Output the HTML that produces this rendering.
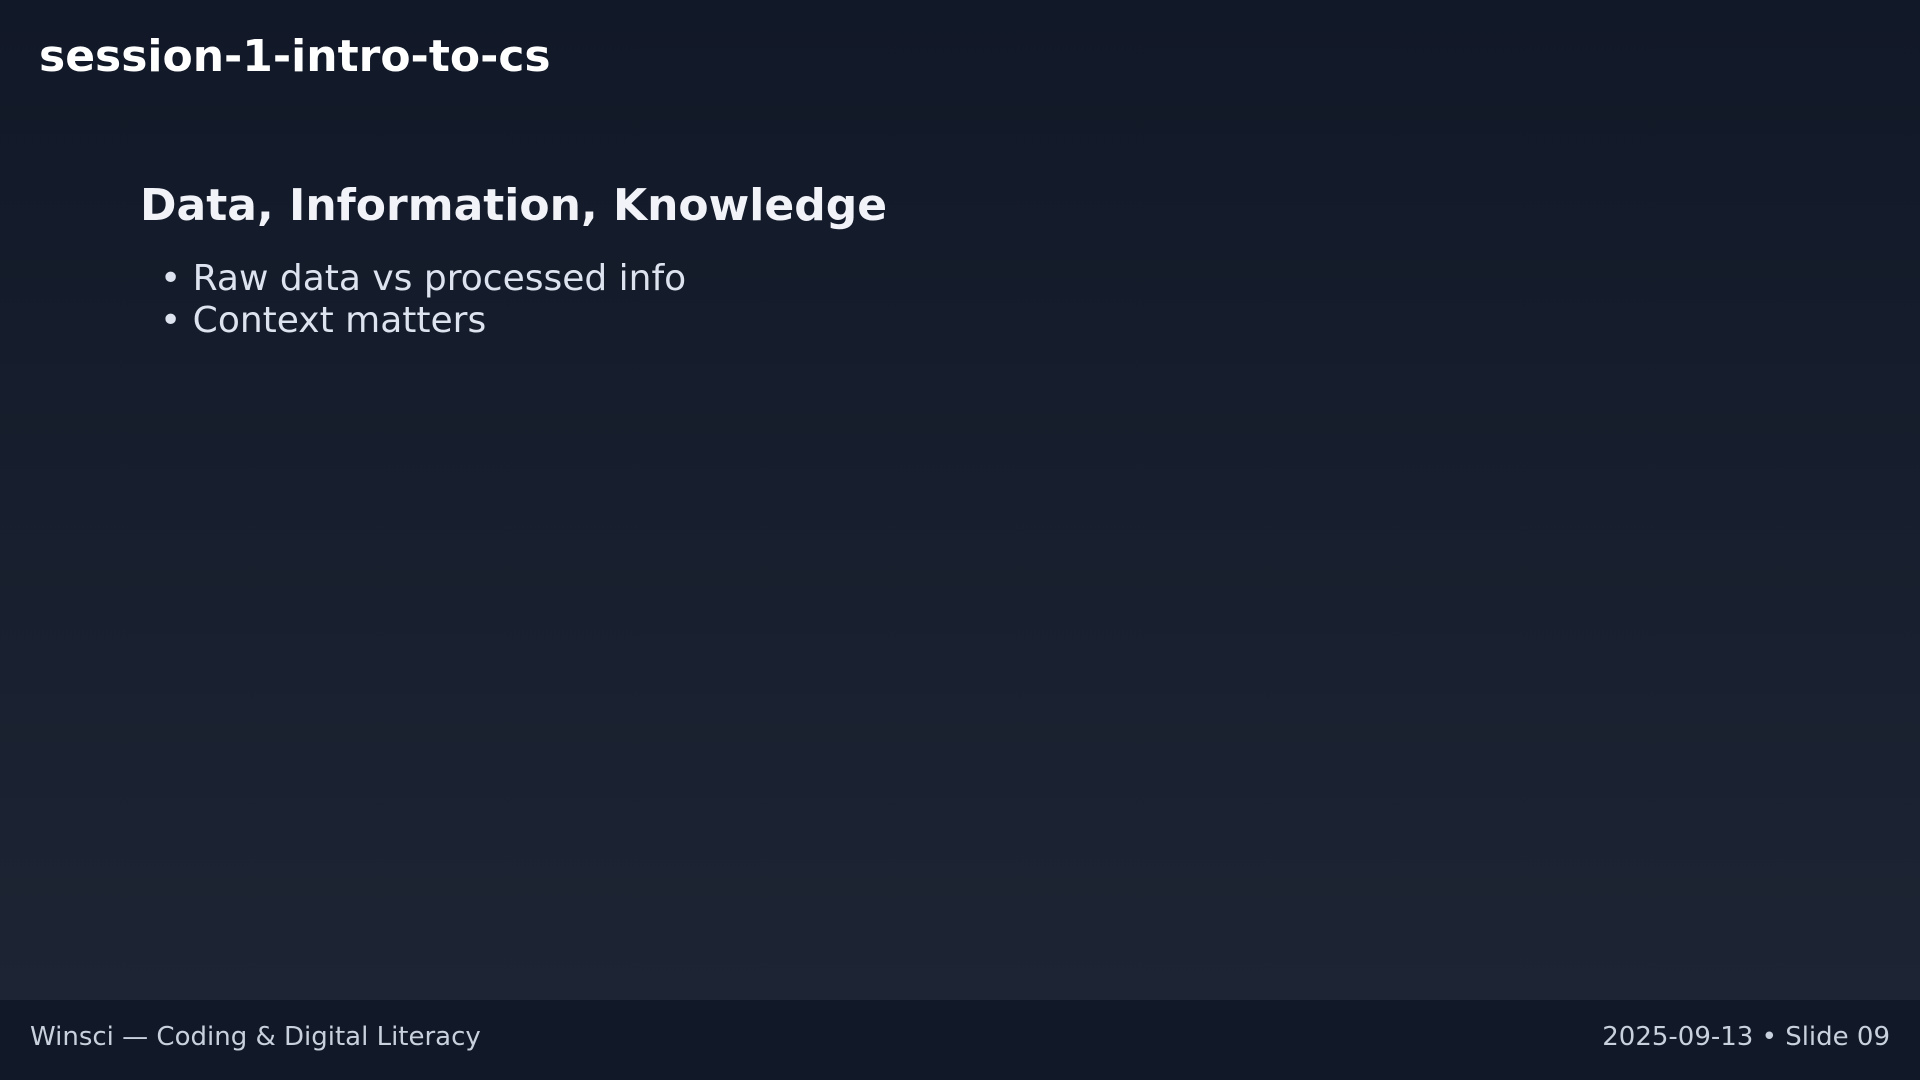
<!DOCTYPE html>
<html><head><meta charset="utf-8"><style>
html,body{margin:0;padding:0;width:1920px;height:1080px;overflow:hidden}
body{background:linear-gradient(180deg,#111827 0%,#1e2635 100%);font-family:"DejaVu Sans","Liberation Sans",sans-serif;position:relative}
.top{position:absolute;left:39px;top:32px;font-size:44px;font-weight:bold;color:#fff;line-height:50px}
h1{position:absolute;left:140px;top:180px;margin:0;font-size:44px;font-weight:bold;color:#f1f3f9;line-height:52px}
.b{position:absolute;left:160px;top:258px;font-size:36px;color:#dde3ef;line-height:42px}
.foot{position:absolute;left:0;top:1000px;width:1920px;height:80px;background:#111827;color:#c8d0dd;font-size:26px}
.foot .l{position:absolute;left:30px;top:22px}
.foot .r{position:absolute;right:30px;top:22px}
</style></head><body>
<div class="top">session-1-intro-to-cs</div>
<h1>Data, Information, Knowledge</h1>
<div class="b">• Raw data vs processed info<br>• Context matters</div>
<div class="foot"><span class="l">Winsci — Coding &amp; Digital Literacy</span><span class="r">2025-09-13 • Slide 09</span></div>
</body></html>
